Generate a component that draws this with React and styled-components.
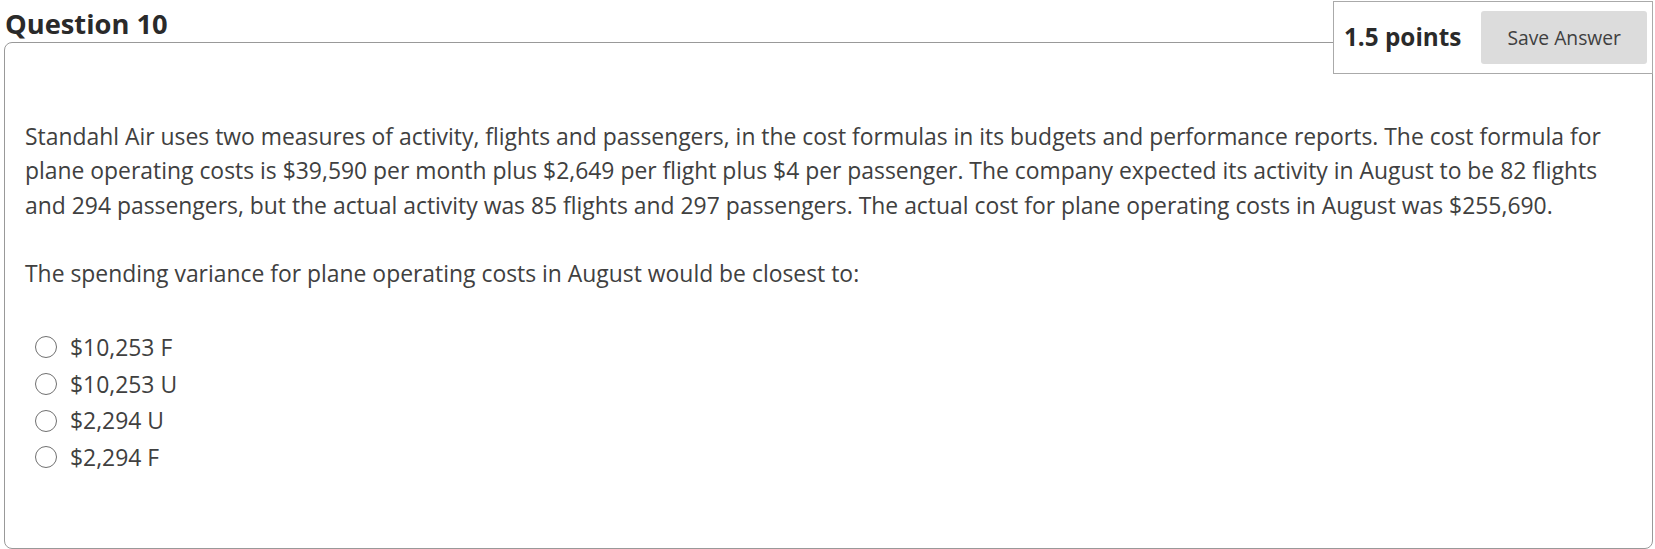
import React from 'react';
import styled, { createGlobalStyle } from 'styled-components';

const GlobalStyle = createGlobalStyle`
  html, body {
    margin: 0;
    padding: 0;
    background: #fff;
    font-family: "Open Sans", "Noto Sans", sans-serif;
    color: #404040;
  }
`;

const Page = styled.div`
  padding: 5px 2px 0 4px;
`;

const Title = styled.h2`
  margin: 0 0 0 1px;
  font-size: 27.3px;
  font-weight: 700;
  line-height: 37px;
  color: #2a2a2a;
`;

const Card = styled.div`
  position: relative;
  border: 1px solid #999;
  border-radius: 8px;
  padding: 77px 20px 72px 20px;
`;

const PointsBox = styled.div`
  position: absolute;
  top: -42px;
  right: -1px;
  display: flex;
  align-items: center;
  gap: 20px;
  padding: 9px 5px 9px 10px;
  background: #fff;
  border: 1px solid #aaa;
`;

const Points = styled.span`
  font-size: 24.3px;
  font-weight: 700;
  color: #2a2a2a;
  margin-bottom: 3px;
`;

const SaveButton = styled.button`
  font-family: "Open Sans", "Noto Sans", sans-serif;
  font-size: 19.3px;
  color: #404040;
  background: #dcdcdc;
  border: none;
  border-radius: 3px;
  height: 53px;
  padding: 0 26px;
`;

const Paragraph = styled.p`
  margin: 0 0 ${(p) => (p.last ? '0' : '34px')} 0;
  font-size: 22.9px;
  line-height: 34.3px;
  color: #404040;
`;

const Options = styled.div`
  margin-top: 38px;
  padding-left: 10px;
`;

const Option = styled.label`
  display: flex;
  align-items: center;
  gap: 13px;
  height: 36.6px;
  font-size: 22.9px;
  color: #404040;
`;

const Radio = styled.span`
  box-sizing: border-box;
  width: 22px;
  height: 22px;
  border-radius: 50%;
  border: 1.5px solid #707070;
  background: #fff;
  flex-shrink: 0;
`;

const options = ['$10,253 F', '$10,253 U', '$2,294 U', '$2,294 F'];

export default function App() {
  return (
    <Page>
      <GlobalStyle />
      <Title>Question 10</Title>
      <Card>
        <PointsBox>
          <Points>1.5 points</Points>
          <SaveButton>Save Answer</SaveButton>
        </PointsBox>
        <Paragraph>
          Standahl Air uses two measures of activity, flights and passengers, in the cost formulas in its budgets and performance reports. The cost formula for plane operating costs is $39,590 per month plus $2,649 per flight plus $4 per passenger. The company expected its activity in August to be 82 flights and 294 passengers, but the actual activity was 85 flights and 297 passengers. The actual cost for plane operating costs in August was $255,690.
        </Paragraph>
        <Paragraph last>
          The spending variance for plane operating costs in August would be closest to:
        </Paragraph>
        <Options>
          {options.map((o) => (
            <Option key={o}>
              <Radio />
              {o}
            </Option>
          ))}
        </Options>
      </Card>
    </Page>
  );
}
